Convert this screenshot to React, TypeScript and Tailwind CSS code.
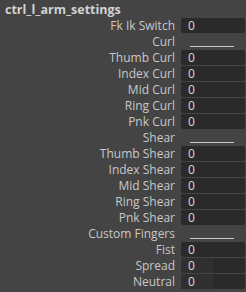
import React from 'react';

type Row = { label: string; kind: 'field' | 'header' | 'slider' };

const rows: Row[] = [
  { label: 'Fk Ik Switch', kind: 'field' },
  { label: 'Curl', kind: 'header' },
  { label: 'Thumb Curl', kind: 'field' },
  { label: 'Index Curl', kind: 'field' },
  { label: 'Mid Curl', kind: 'field' },
  { label: 'Ring Curl', kind: 'field' },
  { label: 'Pnk Curl', kind: 'field' },
  { label: 'Shear', kind: 'header' },
  { label: 'Thumb Shear', kind: 'field' },
  { label: 'Index Shear', kind: 'field' },
  { label: 'Mid Shear', kind: 'field' },
  { label: 'Ring Shear', kind: 'field' },
  { label: 'Pnk Shear', kind: 'field' },
  { label: 'Custom Fingers', kind: 'header' },
  { label: 'Fist', kind: 'field' },
  { label: 'Spread', kind: 'slider' },
  { label: 'Neutral', kind: 'slider' },
];

export default function App() {
  return (
    <div
      className="w-[246px] h-[292px] bg-[#444444] overflow-hidden text-[#cfcfcf]"
      style={{ fontFamily: '"Open Sans", "DejaVu Sans", sans-serif' }}
    >
      <div className="pl-[5px] pt-[3px] h-[18px] text-[12.5px] leading-[13px] font-bold text-[#d2d2d2]">
        ctrl_l_arm_settings
      </div>

      <div className="flex flex-col gap-px">
        {rows.map((row) => (
          <div key={row.label} className="flex items-center h-[15px]">
            <div className="w-[175px] text-right text-[12px] leading-[15px] text-[#c8c8c8] whitespace-nowrap">
              {row.label}
            </div>
            <div className="ml-[6px] w-[64px] h-[15px]">
              {row.kind === 'header' ? (
                <div className="pt-[12px] pl-[9px]">
                  <div className="w-[44px] h-px bg-[#c4c4c4]" />
                </div>
              ) : (
                <div className="relative flex items-center h-full rounded-[2px] bg-[#2a2a2a] overflow-hidden">
                  {row.kind === 'slider' && (
                    <div className="absolute left-0 top-0 h-full w-[32px] bg-[#303030]" />
                  )}
                  <span className="relative pl-[7px] text-[12px] leading-[15px] text-[#dadada]">0</span>
                </div>
              )}
            </div>
          </div>
        ))}
      </div>
    </div>
  );
}
